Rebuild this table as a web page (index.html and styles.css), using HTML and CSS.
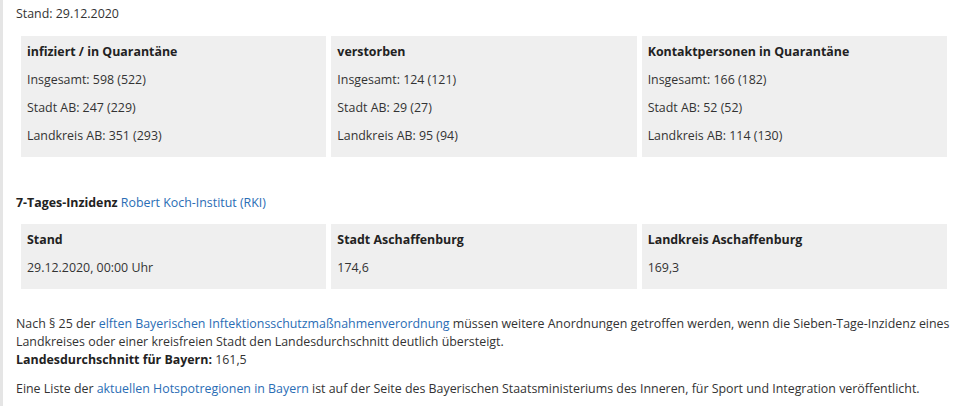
FILE: index.html
```html
<!DOCTYPE html>
<html>
  <head>
    <title>Corona Fallzahlen</title>
    <meta charset="UTF-8" />
    <link rel="stylesheet" href="styles.css">
  </head>

  <body>
    <div class="content">
      <p class="date">Stand: 29.12.2020</p>

      <table class="stats">
        <tr>
          <td>
            <p><strong>infiziert / in Quarantäne</strong></p>
            <p>Insgesamt: 598 (522)</p>
            <p>Stadt AB: 247 (229)</p>
            <p>Landkreis AB: 351 (293)</p>
          </td>
          <td>
            <p><strong>verstorben</strong></p>
            <p>Insgesamt: 124 (121)</p>
            <p>Stadt AB: 29 (27)</p>
            <p>Landkreis AB: 95 (94)</p>
          </td>
          <td>
            <p><strong>Kontaktpersonen in Quarantäne</strong></p>
            <p>Insgesamt: 166 (182)</p>
            <p>Stadt AB: 52 (52)</p>
            <p>Landkreis AB: 114 (130)</p>
          </td>
        </tr>
      </table>

      <p class="heading"><strong>7-Tages-Inzidenz</strong> <a href="#">Robert Koch-Institut (RKI)</a></p>

      <table class="stats">
        <tr>
          <td>
            <p><strong>Stand</strong></p>
            <p>29.12.2020, 00:00 Uhr</p>
          </td>
          <td>
            <p><strong>Stadt Aschaffenburg</strong></p>
            <p>174,6</p>
          </td>
          <td>
            <p><strong>Landkreis Aschaffenburg</strong></p>
            <p>169,3</p>
          </td>
        </tr>
      </table>

      <p class="note">Nach § 25 der <a href="#">elften Bayerischen Inftektionsschutzmaßnahmenverordnung</a> müssen weitere Anordnungen getroffen werden, wenn die Sieben-Tage-Inzidenz eines Landkreises oder einer kreisfreien Stadt den Landesdurchschnitt deutlich übersteigt.<br><strong>Landesdurchschnitt für Bayern:</strong> 161,5</p>

      <p>Eine Liste der <a href="#">aktuellen Hotspotregionen in Bayern</a> ist auf der Seite des Bayerischen Staatsministeriums des Inneren, für Sport und Integration veröffentlicht.</p>
    </div>
  </body>
</html>
```

FILE: styles.css
```css
* {
  box-sizing: border-box;
}

body {
  margin: 0;
  background: #fff;
  font-family: "Open Sans", "Noto Sans", sans-serif;
  font-size: 12.4px;
  line-height: 18px;
  color: #333;
}

.content {
  width: 952px;
  min-height: 406px;
  padding: 5px 0 0 13px;
  border-left: 3px solid #e5e5e5;
}

p {
  margin: 0 0 10px;
}

strong {
  font-weight: 700;
  color: #222;
}

a {
  color: #2a6db5;
  text-decoration: none;
}

.date {
  margin-bottom: 8px;
}

.stats {
  width: 100%;
  border-spacing: 5px;
  table-layout: fixed;
}

.stats td {
  vertical-align: top;
  background: #efefef;
  padding: 7px 6px 2px;
}

.heading {
  margin: 32px 0 7px;
}

.note {
  margin: 21px 0 11px;
}
```
